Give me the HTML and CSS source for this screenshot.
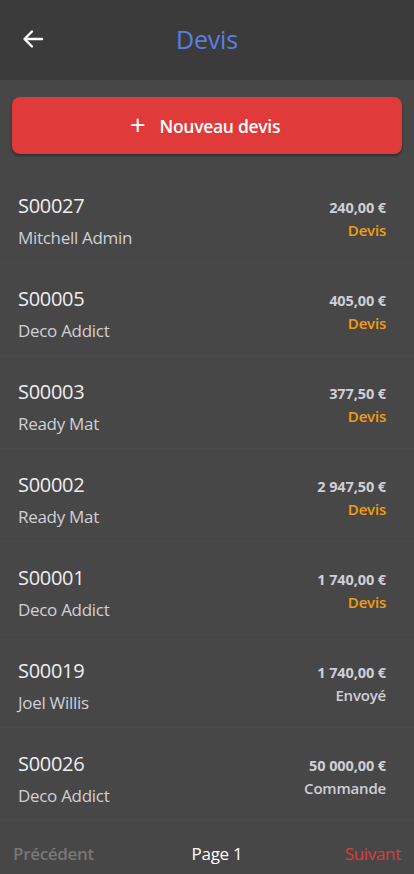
FILE: index.html
```html
<!DOCTYPE html>
<html lang="fr">
<head>
<meta charset="utf-8">
<link rel="stylesheet" href="styles.css">
</head>
<body>
<div class="app">
  <header class="topbar">
    <svg class="back" width="24" height="24" viewBox="0 0 24 24" fill="none" stroke="#fff" stroke-width="2.4" stroke-linecap="round" stroke-linejoin="round"><path d="M21 12H4M11 4.5L3.5 12 11 19.5"/></svg>
    <h1 class="title">Devis</h1>
  </header>
  <main class="content">
    <button class="new-btn"><span class="plus">+</span>Nouveau devis</button>
    <ul class="list">
      <li class="row"><div class="left"><div class="ref">S00027</div><div class="client">Mitchell Admin</div></div><div class="right"><div class="amount">240,00 €</div><div class="state devis">Devis</div></div></li>
      <li class="row"><div class="left"><div class="ref">S00005</div><div class="client">Deco Addict</div></div><div class="right"><div class="amount">405,00 €</div><div class="state devis">Devis</div></div></li>
      <li class="row"><div class="left"><div class="ref">S00003</div><div class="client">Ready Mat</div></div><div class="right"><div class="amount">377,50 €</div><div class="state devis">Devis</div></div></li>
      <li class="row"><div class="left"><div class="ref">S00002</div><div class="client">Ready Mat</div></div><div class="right"><div class="amount">2 947,50 €</div><div class="state devis">Devis</div></div></li>
      <li class="row"><div class="left"><div class="ref">S00001</div><div class="client">Deco Addict</div></div><div class="right"><div class="amount">1 740,00 €</div><div class="state devis">Devis</div></div></li>
      <li class="row"><div class="left"><div class="ref">S00019</div><div class="client">Joel Willis</div></div><div class="right"><div class="amount">1 740,00 €</div><div class="state other">Envoyé</div></div></li>
      <li class="row"><div class="left"><div class="ref">S00026</div><div class="client">Deco Addict</div></div><div class="right"><div class="amount">50 000,00 €</div><div class="state other">Commande</div></div></li>
    </ul>
  </main>
  <footer class="pager">
    <span class="prev">Précédent</span>
    <span class="page">Page 1</span>
    <span class="next">Suivant</span>
  </footer>
</div>
</body>
</html>
```
FILE: styles.css
```css
* { box-sizing: border-box; margin: 0; padding: 0; }
html, body { height: 100%; }
body {
  background: #474747;
  font-family: "Open Sans", "Noto Sans", sans-serif;
  color: #e6e6ea;
  overflow: hidden;
}
.app { display: flex; flex-direction: column; height: 874px; }
.topbar {
  height: 80px;
  background: #3b3b3b;
  display: grid;
  grid-template-columns: 56px 1fr 56px;
  align-items: center;
}
.back { margin-left: 21px; margin-top: -2px; }
.title {
  text-align: center;
  font-size: 25px;
  font-weight: 500;
  color: #5a7fe0;
  margin-top: -3px;
  letter-spacing: -0.2px;
}
.content { flex: 1; padding: 17px 12px 0; }
.new-btn {
  width: 100%;
  height: 57px;
  border: none;
  border-radius: 8px;
  background: #e03a3a;
  color: #fff;
  font-family: inherit;
  font-size: 17.5px;
  font-weight: 600;
  letter-spacing: -0.3px;
  display: flex;
  align-items: center;
  justify-content: center;
  gap: 14px;
  padding-right: 4px;
  box-shadow: 0 2px 3px rgba(0,0,0,0.35);
}
.plus { font-size: 28px; font-weight: 400; line-height: 1; margin-top: -4px; }
.list { list-style: none; margin: 16px -12px 0; }
.row {
  height: 93px;
  display: flex;
  justify-content: space-between;
  padding: 23px 28px 0 18px;
  border-bottom: 1px solid #49494e;
}
.ref { font-size: 20px; line-height: 26px; color: #eeeef0; letter-spacing: -0.3px; }
.client { font-size: 17px; line-height: 24px; margin-top: 7px; color: #d0d0d6; letter-spacing: -0.3px; }
.right { text-align: right; padding-top: 5px; }
.amount { font-size: 14.5px; font-weight: 700; color: #cfcfd6; line-height: 19px; letter-spacing: -0.1px; }
.state { font-size: 15px; font-weight: 600; line-height: 20px; margin-top: 3px; letter-spacing: -0.2px; }
.state.devis { color: #f39c12; }
.state.other { color: #cfcfd6; }
.pager {
  height: 52px;
  display: grid;
  grid-template-columns: 1fr auto 1fr;
  align-items: center;
  padding: 10px 13px 0;
  font-size: 17px;
  letter-spacing: -0.3px;
}
.prev { color: #777; font-weight: 600; }
.page { color: #fff; margin-left: 20px; }
.next { color: #e03a3a; font-weight: 500; text-align: right; }
```
